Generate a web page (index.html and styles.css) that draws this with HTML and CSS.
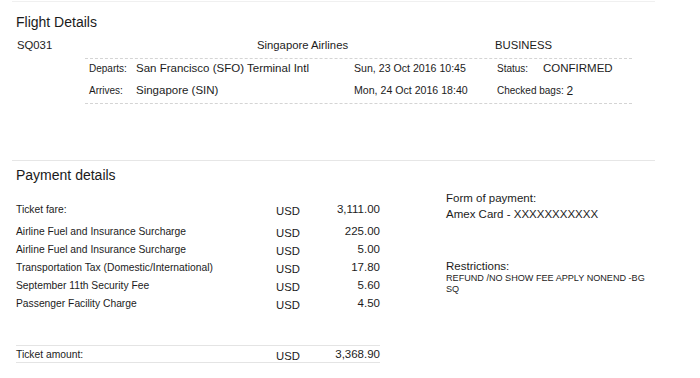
FILE: index.html
```html
<!DOCTYPE html>
<html>
<head>
<meta charset="utf-8">
<link rel="stylesheet" href="styles.css">
</head>
<body>
<div class="page">
  <section class="flight">
    <h2 class="title">Flight Details</h2>
    <div class="flight-head">
      <span class="code">SQ031</span>
      <span class="airline">Singapore Airlines</span>
      <span class="cabin">BUSINESS</span>
    </div>
    <div class="legs">
      <div class="leg">
        <span class="lbl">Departs:</span>
        <span class="val">San Francisco (SFO) Terminal Intl</span>
        <span class="date">Sun, 23 Oct 2016 10:45</span>
        <span class="lbl">Status:</span>
        <span class="val">CONFIRMED</span>
      </div>
      <div class="leg">
        <span class="lbl">Arrives:</span>
        <span class="val">Singapore (SIN)</span>
        <span class="date">Mon, 24 Oct 2016 18:40</span>
        <span class="lbl bags">Checked bags: <span class="bagnum">2</span></span>
        <span></span>
      </div>
    </div>
  </section>
  <section class="payment">
    <h2 class="title">Payment details</h2>
    <div class="pay-body">
      <div class="charges">
        <div class="row first"><span class="desc">Ticket fare:</span><span class="cur">USD</span><span class="amt">3,111.00</span></div>
        <div class="row"><span class="desc">Airline Fuel and Insurance Surcharge</span><span class="cur">USD</span><span class="amt">225.00</span></div>
        <div class="row"><span class="desc">Airline Fuel and Insurance Surcharge</span><span class="cur">USD</span><span class="amt">5.00</span></div>
        <div class="row"><span class="desc">Transportation Tax (Domestic/International)</span><span class="cur">USD</span><span class="amt">17.80</span></div>
        <div class="row"><span class="desc">September 11th Security Fee</span><span class="cur">USD</span><span class="amt">5.60</span></div>
        <div class="row"><span class="desc">Passenger Facility Charge</span><span class="cur">USD</span><span class="amt">4.50</span></div>
        <div class="row total"><span class="desc">Ticket amount:</span><span class="cur">USD</span><span class="amt">3,368.90</span></div>
      </div>
      <div class="side">
        <div class="fop">
          <div>Form of payment:</div>
          <div>Amex Card - XXXXXXXXXXX</div>
        </div>
        <div class="restr">
          <div class="restr-h">Restrictions:</div>
          <div class="restr-t">REFUND /NO SHOW FEE APPLY NONEND -BG<br>SQ</div>
        </div>
      </div>
    </div>
  </section>
</div>
</body>
</html>
```

FILE: styles.css
```css
html, body {
  margin: 0;
  padding: 0;
  background: #fff;
}
body {
  font-family: "Liberation Sans", Arial, sans-serif;
  color: #1c1c1c;
}
.page {
  width: 643px;
  margin-left: 12px;
  padding-top: 1px;
}
.flight {
  border-top: 1px solid #f0f0f0;
  padding-left: 4px;
  height: 158px;
}
.title {
  font-size: 14px;
  font-weight: normal;
  margin: 0;
  line-height: 16px;
  color: #1a1a1a;
}
.flight .title {
  padding-top: 12px;
}
.flight-head {
  display: grid;
  grid-template-columns: 241px 238px auto;
  font-size: 11.3px;
  line-height: 14px;
  margin-top: 8px;
}
.code { padding-left: 1px; }
.legs {
  margin-left: 69px;
  width: 547px;
  margin-top: 6px;
  border-top: 1px dashed #d4d4d4;
  border-bottom: 1px dashed #d4d4d4;
}
.leg {
  display: grid;
  grid-template-columns: 47px 218px 143px 46px auto;
  align-items: baseline;
  padding-left: 4px;
  height: 22px;
  line-height: 18px;
}
.lbl { font-size: 10px; }
.val { font-size: 11.5px; }
.date { font-size: 10.6px; }
.bags { white-space: nowrap; }
.bagnum { font-size: 12px; position: relative; top: 1px; }
.payment {
  border-top: 1px solid #e6e6e6;
  padding-left: 4px;
}
.payment .title {
  padding-top: 6px;
}
.pay-body {
  display: flex;
  margin-top: 7px;
}
.charges {
  width: 364px;
  padding-top: 10px;
}
.row {
  display: grid;
  grid-template-columns: 260px 44px 60px;
  align-items: baseline;
  height: 18px;
  line-height: 18px;
}
.row.first {
  margin-bottom: 4px;
}
.desc { font-size: 10.3px; }
.cur { font-size: 11.3px; position: relative; top: 2px; }
.amt { font-size: 11.5px; text-align: right; }
.row.total {
  margin-top: 33px;
  border-top: 1px solid #e4e4e4;
  border-bottom: 1px solid #e4e4e4;
  height: 16px;
  line-height: 16px;
}
.side {
  margin-left: 66px;
  font-size: 11.5px;
  line-height: 16px;
}
.restr {
  margin-top: 37px;
}
.restr-h {
  font-size: 11.5px;
  line-height: 14px;
}
.restr-t {
  font-size: 9.1px;
  line-height: 11px;
  white-space: nowrap;
}
```
